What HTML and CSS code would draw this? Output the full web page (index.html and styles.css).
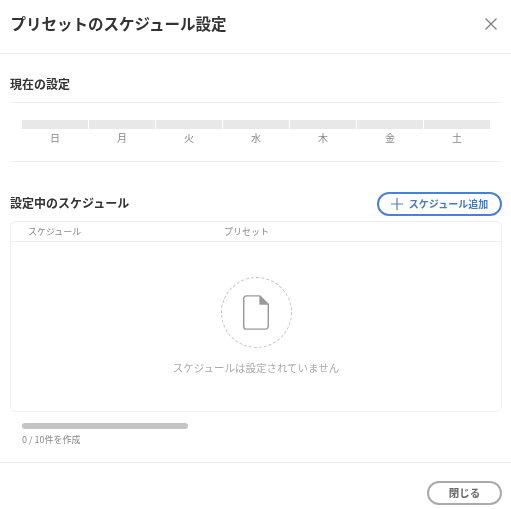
FILE: index.html
```html
<!DOCTYPE html>
<html lang="ja">
<head>
  <meta charset="UTF-8">
  <title>プリセットのスケジュール設定</title>
  <link rel="stylesheet" href="styles.css">
</head>
<body>
<div class="dialog">
  <header class="dialog-head">
    <h1>プリセットのスケジュール設定</h1>
    <button class="close-x" aria-label="閉じる">
      <svg width="14" height="14" viewBox="0 0 14 14"><path d="M1.5 1.5 L12.5 12.5 M12.5 1.5 L1.5 12.5" stroke="#777" stroke-width="1.1" fill="none"/></svg>
    </button>
  </header>

  <main class="dialog-body">
    <h2 class="current-title">現在の設定</h2>
    <section class="week">
      <div class="day"><span class="day-bar"></span><span class="day-name">日</span></div>
      <div class="day"><span class="day-bar"></span><span class="day-name">月</span></div>
      <div class="day"><span class="day-bar"></span><span class="day-name">火</span></div>
      <div class="day"><span class="day-bar"></span><span class="day-name">水</span></div>
      <div class="day"><span class="day-bar"></span><span class="day-name">木</span></div>
      <div class="day"><span class="day-bar"></span><span class="day-name">金</span></div>
      <div class="day"><span class="day-bar"></span><span class="day-name">土</span></div>
    </section>

    <div class="list-head">
      <h2>設定中のスケジュール</h2>
      <button class="add-btn">
        <svg width="12" height="12" viewBox="0 0 12 12"><path d="M6 0 V12 M0 6 H12" stroke="#5a7fb5" stroke-width="1.2" fill="none"/></svg>
        <span>スケジュール追加</span>
      </button>
    </div>

    <div class="table">
      <div class="table-head">
        <span class="col-schedule">スケジュール</span>
        <span>プリセット</span>
      </div>
      <div class="empty">
        <div class="empty-circle">
          <svg width="26" height="35" viewBox="0 0 27 36">
            <path d="M3.5 .75 H17.5 L26.25 9.5 V32.5 A2.75 2.75 0 0 1 23.5 35.25 H3.5 A2.75 2.75 0 0 1 .75 32.5 V3.5 A2.75 2.75 0 0 1 3.5 .75 Z" fill="#fff" stroke="#9a9a9a" stroke-width="1.5"/>
            <path d="M17 .5 L26.5 10 H17 Z" fill="#9a9a9a"/>
          </svg>
        </div>
        <p class="empty-text">スケジュールは設定されていません</p>
      </div>
    </div>

    <div class="quota">
      <div class="quota-bar"></div>
      <p>0 / 10件を作成</p>
    </div>
  </main>

  <footer class="dialog-foot">
    <button class="close-btn">閉じる</button>
  </footer>
</div>
</body>
</html>
```

FILE: styles.css
```css
* {
  margin: 0;
  padding: 0;
  box-sizing: border-box;
}

body {
  font-family: "Noto Sans CJK JP", "Noto Sans", sans-serif;
  color: #333;
}

button {
  font-family: inherit;
  background: #fff;
  cursor: pointer;
}

.dialog {
  width: 511px;
  height: 509px;
  overflow: hidden;
  transform: translateZ(0);
}

.dialog-head {
  height: 54px;
  padding: 0 13px 5px 10.5px;
  display: flex;
  align-items: center;
  justify-content: space-between;
  border-bottom: 1px solid #f0f0f0;
}

.dialog-head h1 {
  padding-bottom: 3px;
  font-size: 15.5px;
  font-weight: 700;
  color: #333;
}

.close-x {
  border: none;
  width: 14px;
  height: 14px;
  display: flex;
}

.dialog-body {
  padding: 0 9px 0 10px;
}

h2 {
  font-size: 12px;
  font-weight: 700;
  color: #333;
}

.current-title {
  height: 49px;
  padding-top: 21px;
  line-height: 17px;
  border-bottom: 1px solid #f0f0f0;
}

.week {
  display: flex;
  gap: 1px;
  padding: 17px 12px 0 12px;
  height: 59px;
  border-bottom: 1px solid #f0f0f0;
}

.day {
  flex: 1;
  display: flex;
  flex-direction: column;
  align-items: center;
}

.day-bar {
  width: 100%;
  height: 9px;
  background: #e8e8e8;
}

.day-name {
  font-size: 10px;
  line-height: 14px;
  margin-top: 2px;
  color: #888;
}

.list-head {
  display: flex;
  align-items: center;
  justify-content: space-between;
  margin-top: 30px;
  height: 24px;
}

.list-head h2 {
  padding-bottom: 3px;
}

.add-btn {
  width: 125px;
  height: 24px;
  padding-bottom: 1px;
  border: 2px solid #4a7fe0;
  border-radius: 12px;
  display: flex;
  align-items: center;
  justify-content: center;
  gap: 6px;
  font-size: 10px;
  font-weight: 700;
  color: #4a78c8;
}

.table {
  margin-top: 5px;
  height: 191px;
  border: 1px solid #efefef;
  border-radius: 6px;
}

.table-head {
  height: 20px;
  display: flex;
  align-items: center;
  padding-left: 17px;
  padding-bottom: 1px;
  font-size: 9px;
  color: #888;
  border-bottom: 1px solid #f0f0f0;
}

.col-schedule {
  width: 196px;
}

.empty {
  display: flex;
  flex-direction: column;
  align-items: center;
  padding-top: 35px;
}

.empty-circle {
  width: 71px;
  height: 71px;
  border: 1px dashed #bbb;
  border-radius: 50%;
  display: flex;
  align-items: center;
  justify-content: center;
}

.empty-text {
  margin-top: 12px;
  font-size: 10.5px;
  line-height: 16px;
  color: #aaa;
}

.quota {
  padding: 11px 0 0 12px;
  height: 50px;
}

.quota-bar {
  width: 166px;
  height: 6px;
  border-radius: 3px;
  background: #c4c4c4;
}

.quota p {
  margin-top: 4px;
  font-size: 9px;
  line-height: 14px;
  color: #888;
}

.dialog-foot {
  border-top: 1px solid #f0f0f0;
  padding: 18px 9px 0 0;
  display: flex;
  justify-content: flex-end;
}

.close-btn {
  width: 75px;
  height: 24px;
  padding-bottom: 1px;
  border: 2px solid #aaa;
  border-radius: 12px;
  font-size: 10.5px;
  font-weight: 700;
  color: #666;
}
```
